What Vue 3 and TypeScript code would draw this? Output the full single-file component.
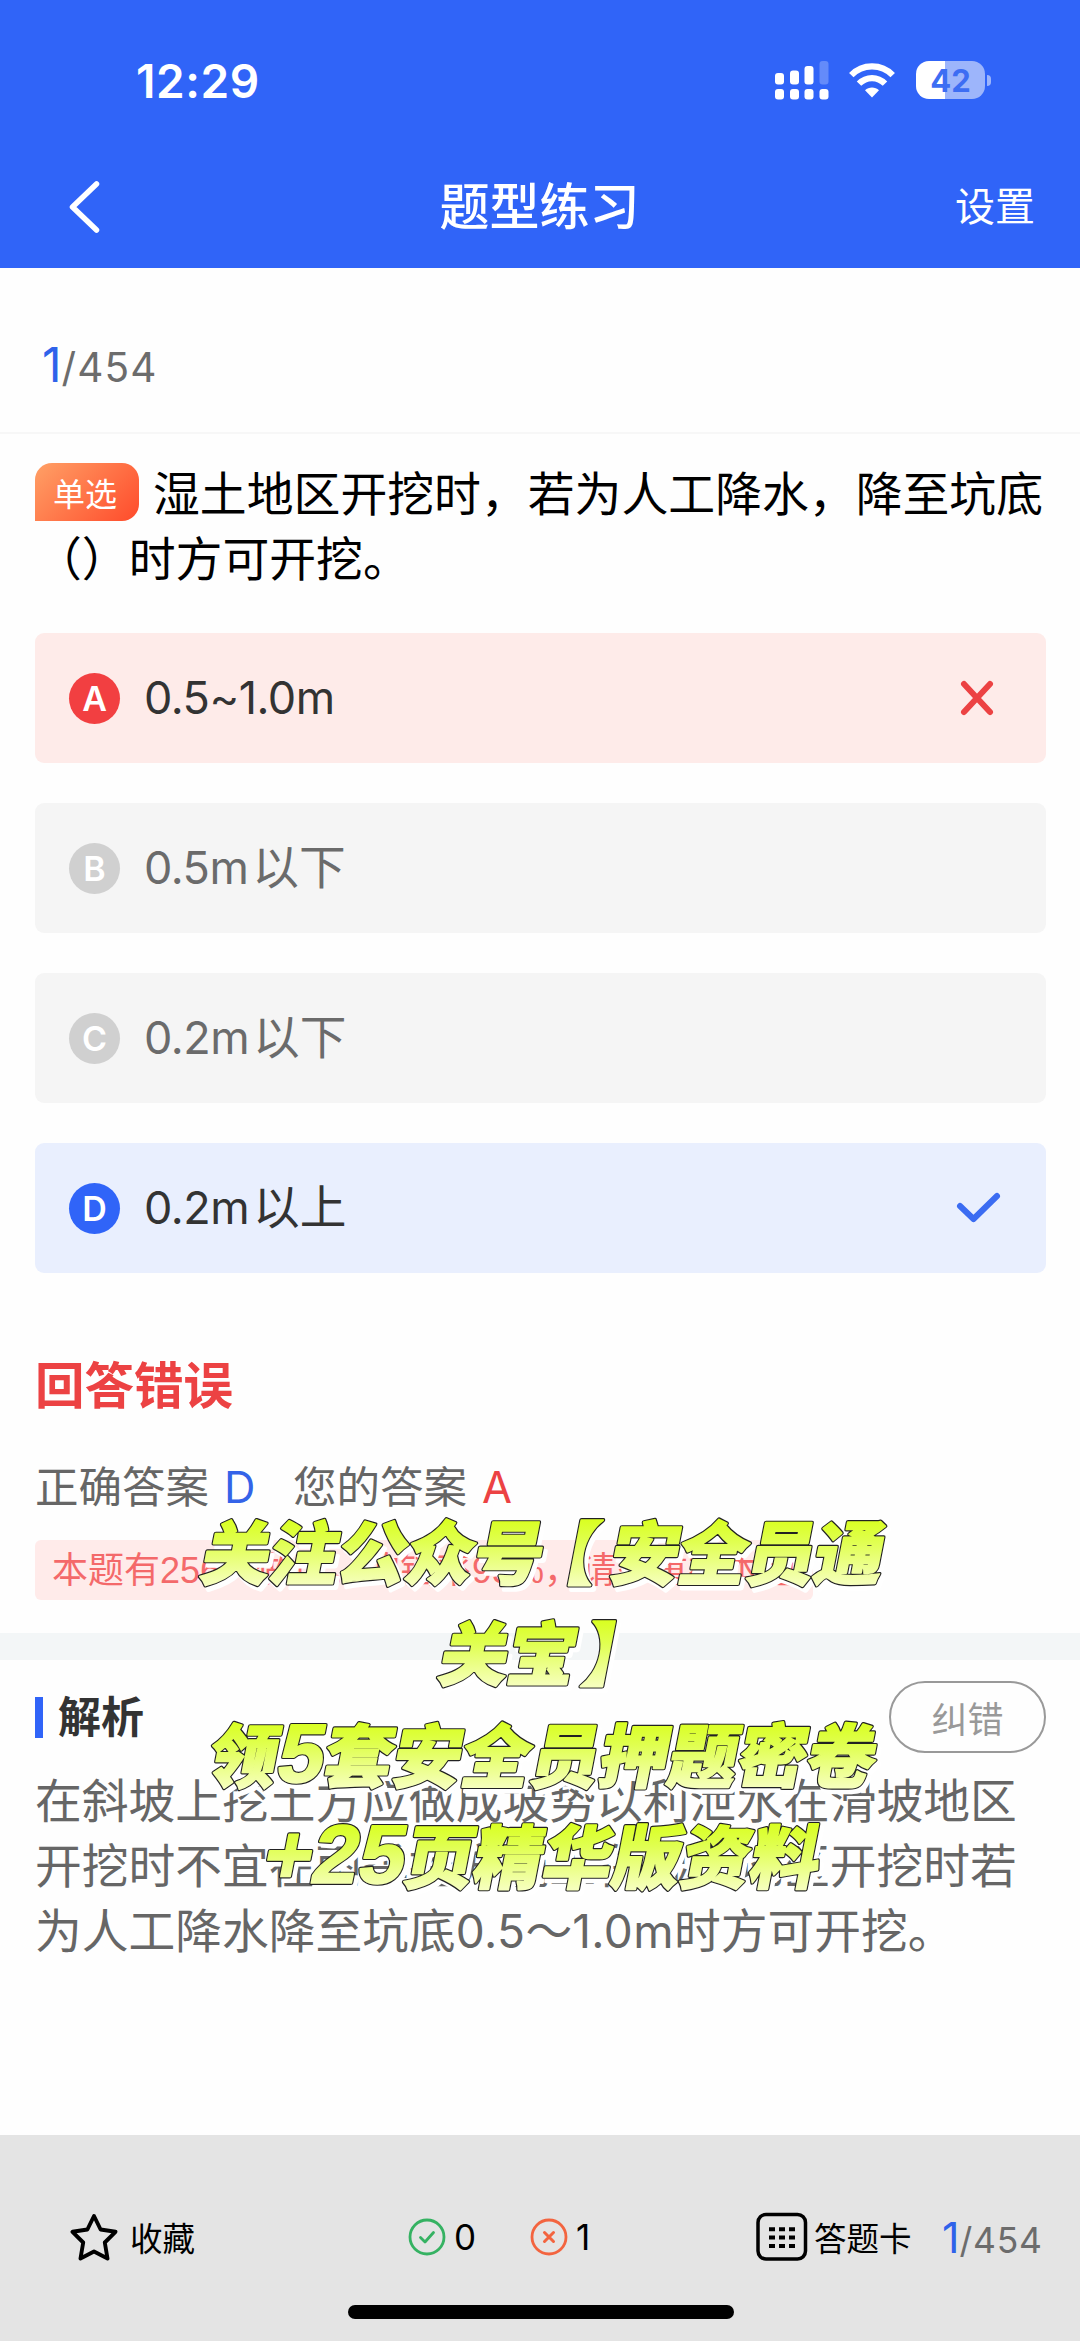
<script setup lang="ts">
interface Option {
  key: string
  value: string
  suffix: string
  state: 'wrong' | 'idle' | 'right'
}

interface PromoPart {
  text: string
  latin?: boolean
  dx?: number
}

interface PromoLine {
  id: string
  x: number
  y: number
  length: number
  parts: PromoPart[]
}

const options: Option[] = [
  { key: 'A', value: '0.5~1.0m', suffix: '', state: 'wrong' },
  { key: 'B', value: '0.5m', suffix: '以下', state: 'idle' },
  { key: 'C', value: '0.2m', suffix: '以下', state: 'idle' },
  { key: 'D', value: '0.2m', suffix: '以上', state: 'right' },
]

const promo: PromoLine[] = [
  { id: 'promo-1', x: 198, y: 69, length: 682, parts: [{ text: '关注公众号' }, { text: '【', dx: -14 }, { text: '安全员通', dx: 14 }] },
  { id: 'promo-2', x: 436, y: 170, length: 213, parts: [{ text: '关宝' }, { text: '】', dx: 9 }] },
  { id: 'promo-3', x: 205, y: 272, length: 667, parts: [{ text: '领' }, { text: '5', latin: true }, { text: '套安全员押题密卷' }] },
  { id: 'promo-4', x: 260, y: 373, length: 556, parts: [{ text: '+25', latin: true }, { text: '页精华版资料' }] },
]
</script>

<template>
  <main class="screen">
    <header class="top">
      <div class="status">
        <span class="clock">12:29</span>
        <svg class="signal" width="54" height="39" viewBox="0 0 54 39" fill="#fff">
          <rect x="0" y="12" width="9" height="11.5" rx="3" />
          <rect x="15" y="9.500" width="9" height="14" rx="3" />
          <rect x="29.500" y="5" width="9" height="18.500" rx="3" />
          <rect x="44.500" y="0" width="9" height="23.500" rx="3" opacity=".25" />
          <rect x="0" y="28" width="9" height="10.500" rx="3" />
          <rect x="15" y="28" width="9" height="10.500" rx="3" />
          <rect x="29.500" y="28" width="9" height="10.500" rx="3" />
          <rect x="44.500" y="28" width="9" height="10.500" rx="3" />
        </svg>
        <svg class="wifi" width="46" height="35" viewBox="0 0 46 35">
          <g fill="none" stroke="#fff" stroke-width="6.200">
            <path d="M2.300 12.200C13.500 .500 32.500 .500 43.700 12.200" />
            <path d="M10 20.700C17.300 13.200 28.700 13.200 36 20.700" />
          </g>
          <path d="M23 34.500L16 27.300C19.800 23.600 26.200 23.600 30 27.300Z" fill="#fff" />
        </svg>
        <div class="battery"><span>42</span></div>
        <i class="nub"></i>
      </div>
      <nav class="nav">
        <svg class="back" width="34" height="54" viewBox="0 0 34 54" fill="none" stroke="#fff" stroke-width="5.500" stroke-linecap="round" stroke-linejoin="round">
          <path d="M28.500 4L4.500 27L28.500 50" />
        </svg>
        <h1>题型练习</h1>
        <span class="setting">设置</span>
      </nav>
    </header>

    <div class="progress"><b>1</b><span>/454</span></div>

    <section class="quiz">
      <p class="question"><span class="tag">单选</span>湿土地区开挖时，若为人工降水，降至坑底<br />（）时方可开挖。</p>
      <ul class="options">
        <li v-for="o in options" :key="o.key" :class="['option', o.state]">
          <span class="badge">{{ o.key }}</span>
          <span class="label">{{ o.value }}<span v-if="o.suffix" class="suffix">{{ o.suffix }}</span></span>
          <svg v-if="o.state === 'wrong'" class="mark" width="52" height="44" viewBox="0 0 52 44">
            <path d="M13 8L39 36M39 8L13 36" />
          </svg>
          <svg v-if="o.state === 'right'" class="mark" width="52" height="44" viewBox="0 0 52 44">
            <path d="M9 20L22.500 33L46 10" />
          </svg>
        </li>
      </ul>
    </section>

    <section class="result">
      <h2>回答错误</h2>
      <p class="answers">正确答案<em class="blue">D</em>您的答案<em class="red">A</em></p>
      <p class="tip">本题有256人做过，的错率95%，请多重视本题</p>
    </section>

    <div class="band"></div>

    <section class="analysis">
      <div class="head">
        <h3>解析</h3>
        <button type="button">纠错</button>
      </div>
      <p>在斜坡上挖土方应做成坡势以利泄水在滑坡地区<br />开挖时不宜在雨季挖方施工在湿土地区开挖时若<br />为人工降水降至坑底<span class="num">0.5</span>～<span class="num">1.0m</span>时方可开挖。</p>
    </section>

    <footer class="bar">
      <div class="tools">
        <svg class="star" width="48" height="50" viewBox="0 0 48 50" fill="none" stroke="#000" stroke-width="3.900" stroke-linejoin="round">
          <path d="M24 4L30.600 17.500L45.500 19.800L34.800 30.500L37.500 46.500L24 39.500L10.500 46.500L13.200 30.500L2.500 19.800L17.400 17.500Z" />
        </svg>
        <span class="fav">收藏</span>
        <svg class="ok" width="38" height="38" viewBox="0 0 38 38" fill="none" stroke="#35b262" stroke-width="2.800" stroke-linecap="round" stroke-linejoin="round">
          <circle cx="19" cy="19" r="17" />
          <path d="M12.500 19.500L17 24L25.500 14.500" />
        </svg>
        <span class="count c0">0</span>
        <svg class="bad" width="38" height="38" viewBox="0 0 38 38" fill="none" stroke="#f3643f" stroke-width="2.800" stroke-linecap="round">
          <circle cx="19" cy="19" r="17" />
          <path d="M14.500 14.500L23.500 23.500M23.500 14.500L14.500 23.500" stroke-width="3" />
        </svg>
        <span class="count c1">1</span>
        <svg class="grid" width="52" height="50" viewBox="0 0 52 50">
          <rect x="2" y="2.500" width="47.500" height="44.500" rx="8" fill="none" stroke="#000" stroke-width="3.500" />
          <path d="M13 17.300h6M23 17.300h6M33 17.300h6M13 25.500h6M23 25.500h6M33 25.500h6M13 34h6M23 34h6M33 34h6" stroke="#000" stroke-width="4" />
        </svg>
        <span class="card">答题卡</span>
        <span class="pages"><b>1</b>/454</span>
      </div>
      <div class="home"></div>
    </footer>

    <svg class="promo" width="1080" height="400" viewBox="0 0 1080 400">
      <defs>
        <linearGradient v-for="l in promo" :id="l.id + '-g'" :key="l.id + '-g'" gradientUnits="userSpaceOnUse" x1="0" :y1="-60" x2="0" :y2="6">
          <stop offset="0" stop-color="#d9ff20" />
          <stop offset=".35" stop-color="#e0ff50" />
          <stop offset="1" stop-color="#f6ffbd" />
        </linearGradient>
        <text v-for="l in promo" :id="l.id" :key="l.id" :textLength="l.length"><tspan v-for="(p, i) in l.parts" :key="i" :dx="p.dx" :class="{ latin: p.latin }">{{ p.text }}</tspan></text>
      </defs>
      <g v-for="l in promo" :key="l.id" :transform="`translate(${l.x} ${l.y}) skewX(-11)`">
        <use :href="'#' + l.id" x="4" y="4" fill="#fff" stroke="#fff" stroke-width="5" />
        <use :href="'#' + l.id" fill="#222" stroke="#222" stroke-width="4" />
        <use :href="'#' + l.id" :fill="`url(#${l.id}-g)`" :stroke="`url(#${l.id}-g)`" stroke-width="1.700" />
      </g>
    </svg>
  </main>
</template>

<style>
body {
  margin: 0;
  background: #fff;
}
</style>

<style scoped>
.screen {
  position: relative;
  width: 1080px;
  height: 2341px;
  overflow: hidden;
  display: flex;
  flex-direction: column;
  background: #fefefe;
  font-family: Inter, "Noto Sans CJK SC", sans-serif;
  color: #000;
}
h1, h2, h3, p, ul {
  margin: 0;
  padding: 0;
}
.top {
  height: 268px;
  background: #3064f8;
  color: #fff;
}
.status {
  display: flex;
  align-items: center;
  height: 160px;
  box-sizing: border-box;
  padding: 0 89px 0 136px;
}
.clock {
  width: 639px;
  padding-top: 2px;
  font-size: 46px;
  font-weight: 600;
  letter-spacing: 0.6px;
  line-height: 60px;
}
.wifi {
  margin-left: 20px;
}
.battery {
  margin-left: 21px;
  width: 69px;
  height: 38px;
  border-radius: 13px;
  background: linear-gradient(90deg, #fff 0 29px, #9db5fb 29px);
  color: #3d6df3;
  font-size: 31px;
  font-weight: 700;
  line-height: 39px;
  text-align: center;
}
.nub {
  margin-left: 2px;
  width: 4px;
  height: 11px;
  border-radius: 0 5px 5px 0;
  background: #9db5fb;
}
.nav {
  display: flex;
  align-items: center;
  height: 94px;
  padding: 0 45px 0 68px;
}
.nav h1 {
  flex: 1;
  padding-left: 22px;
  text-align: center;
  font-size: 50px;
  font-weight: 500;
  line-height: 94px;
}
.setting {
  font-size: 40px;
  line-height: 96px;
}
.progress {
  display: flex;
  align-items: baseline;
  height: 166px;
  box-sizing: border-box;
  padding: 62px 0 0 42px;
  border-bottom: 2px solid #f7f7f7;
  color: #6c6c6c;
  font-size: 40.500px;
  letter-spacing: 1.1px;
  line-height: 70px;
}
.progress b {
  font-size: 48px;
  font-weight: 400;
  letter-spacing: 0;
  color: #2f62ea;
}
.quiz {
  padding: 24px 34px 0 35px;
}
.question {
  font-size: 46.850px;
  line-height: 65px;
  white-space: nowrap;
  font-family: "Noto Sans CJK SC", sans-serif;
}
.tag {
  display: inline-block;
  width: 104px;
  height: 58px;
  box-sizing: border-box;
  padding-right: 4px;
  margin: -6px 14px 0 0;
  border-radius: 17px 17px 17px 0;
  background: linear-gradient(135deg, #ffa066, #ff4b2b);
  color: #fff;
  font-size: 32px;
  line-height: 58px;
  text-align: center;
  vertical-align: 5px;
}
.options {
  display: flex;
  flex-direction: column;
  gap: 40px;
  margin-top: 45px;
  list-style: none;
}
.option {
  display: flex;
  align-items: center;
  height: 130px;
  box-sizing: border-box;
  padding: 0 43px 0 34px;
  border-radius: 9px;
  background: #f5f5f5;
  color: #6b6b6b;
}
.badge {
  width: 51px;
  height: 51px;
  border-radius: 50%;
  background: #d0d0d0;
  color: #fff;
  font-size: 34px;
  font-weight: 600;
  line-height: 51px;
  text-align: center;
}
.label {
  flex: 1;
  margin-left: 24px;
  font-size: 45px;
  line-height: 60px;
  letter-spacing: -0.5px;
}
.suffix {
  margin-left: 4px;
  font-size: 46.700px;
  letter-spacing: 0;
  line-height: 1;
}
.wrong {
  background: #feebe9;
  color: #333;
}
.wrong .badge {
  background: #f23f41;
}
.right {
  background: #e9effe;
  color: #333;
}
.right .badge {
  background: #3064f8;
}
.mark path {
  fill: none;
  stroke: #ec4243;
  stroke-width: 6px;
  stroke-linecap: round;
  stroke-linejoin: round;
}
.right .mark path {
  stroke: #3b6cf2;
}
.result {
  height: 360px;
  box-sizing: border-box;
  padding: 83px 35px 0;
}
.result h2 {
  color: #ec4243;
  font-size: 49.500px;
  font-weight: 700;
  line-height: 60px;
}
.answers {
  display: flex;
  margin-top: 40px;
  font-size: 43.500px;
  line-height: 62px;
  color: #666;
}
.answers em {
  font-style: normal;
}
.blue {
  width: 69px;
  margin-left: 15px;
  color: #3463e8;
}
.red {
  margin-left: 15px;
  color: #ec4243;
}
.tip {
  width: 778px;
  height: 60px;
  margin-top: 22px;
  box-sizing: border-box;
  padding-left: 17px;
  border-radius: 6px;
  background: #ffebea;
  color: #f4696a;
  font-size: 36px;
  line-height: 62px;
  white-space: nowrap;
  font-family: "Liberation Sans", "Noto Sans CJK SC", sans-serif;
}
.band {
  height: 27px;
  background: #f3f6f7;
}
.analysis {
  padding: 21px 34px 0 35px;
  color: #666;
}
.head {
  display: flex;
  align-items: center;
  justify-content: space-between;
  height: 72px;
}
.head h3 {
  height: 41px;
  padding-left: 15px;
  border-left: 8px solid #3064f8;
  color: #333;
  font-size: 43px;
  font-weight: 700;
  line-height: 41px;
}
.head button {
  width: 157px;
  height: 72px;
  padding: 0;
  border: 2px solid #999;
  border-radius: 36px;
  background: none;
  color: #999;
  font: 36px/66px "Noto Sans CJK SC", sans-serif;
}
.analysis p {
  margin-top: 12px;
  font-family: "Noto Sans CJK SC", sans-serif;
  font-size: 46.750px;
  line-height: 65px;
  white-space: nowrap;
}
.num {
  font-family: Inter, sans-serif;
  font-size: 46px;
  letter-spacing: 0.4px;
  line-height: 1;
}
.bar {
  height: 206px;
  margin-top: auto;
  background: #e4e4e4;
}
.tools {
  display: flex;
  align-items: center;
  height: 170px;
  padding: 34px 0 0 70px;
  box-sizing: border-box;
}
.fav {
  margin-left: 12px;
  width: 278px;
  margin-top: -2px;
  font-size: 32.500px;
}
.count {
  margin-left: 8px;
  width: 76px;
  font-size: 35px;
}
.c1 {
  width: 180px;
}
.card {
  margin-left: 6px;
  margin-top: -2px;
  width: 128px;
  font-size: 32.500px;
}
.pages {
  font-size: 35.500px;
  letter-spacing: 0.7px;
  color: #6c6c6c;
  white-space: nowrap;
}
.pages b {
  font-size: 43px;
  font-weight: 400;
  letter-spacing: 0;
  color: #2f62ea;
}
.home {
  width: 386px;
  height: 14px;
  margin-left: 348px;
  border-radius: 7px;
  background: #000;
}
.promo {
  position: absolute;
  left: 0;
  top: 1510px;
}
.promo text {
  font-family: "Noto Sans CJK SC", sans-serif;
  font-size: 69px;
  font-weight: 900;
  stroke-linejoin: round;
}
.promo .latin {
  font-family: "Liberation Sans", sans-serif;
  font-size: 83px;
}
</style>
